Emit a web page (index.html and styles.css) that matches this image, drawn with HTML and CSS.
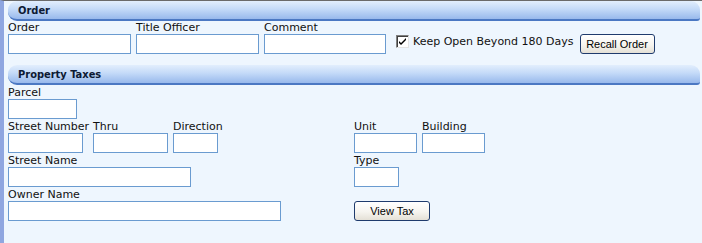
FILE: index.html
```html
<!DOCTYPE html>
<html lang="en">
<head>
    <meta charset="UTF-8">
    <title>Order - Property Taxes</title>
    <link rel="stylesheet" href="styles.css">
</head>
<body>
    <div class="page">
        <div class="band">Order</div>
        <div class="order-row">
            <label class="field"><span>Order</span><input class="box w-order" type="text"></label>
            <label class="field"><span>Title Officer</span><input class="box w-order" type="text"></label>
            <label class="field"><span>Comment</span><input class="box w-comment" type="text"></label>
            <label class="keep">
                <span class="check"><svg width="9" height="9" viewBox="0 0 9 9"><path d="M1 4 L3 6 L8 1 L8 3 L3 8 L1 6 Z" fill="#000"/></svg></span>
                Keep Open Beyond 180 Days
            </label>
            <button class="btn btn-recall">Recall Order</button>
        </div>

        <div class="band">Property Taxes</div>
        <div class="taxes">
            <div class="cell">
                <label class="field"><span>Parcel</span><input class="box w-parcel" type="text"></label>
            </div>
            <div class="cell"></div>

            <div class="cell">
                <label class="field f-stno"><span>Street Number</span><input class="box w-stno" type="text"></label>
                <label class="field"><span>Thru</span><input class="box w-stno" type="text"></label>
                <label class="field"><span>Direction</span><input class="box w-small" type="text"></label>
            </div>
            <div class="cell">
                <label class="field"><span>Unit</span><input class="box w-unit" type="text"></label>
                <label class="field"><span>Building</span><input class="box w-unit" type="text"></label>
            </div>

            <div class="cell">
                <label class="field"><span>Street Name</span><input class="box w-street" type="text"></label>
            </div>
            <div class="cell">
                <label class="field"><span>Type</span><input class="box w-small" type="text"></label>
            </div>

            <div class="cell">
                <label class="field"><span>Owner Name</span><input class="box w-owner" type="text"></label>
            </div>
            <div class="cell">
                <button class="btn btn-view">View Tax</button>
            </div>
        </div>
    </div>
</body>
</html>
```

FILE: styles.css
```css
/* Stil general */
body {
    margin: 0;
    font-family: "DejaVu Sans", Verdana, sans-serif;
    font-size: 11px;
    color: #111;
    background-color: #eef6fe;
}

.page {
    height: 242px;
    border-top: 1px solid #6a6a6a;
    border-left: 4px solid #8fa6e0;
    padding: 0 2px 0 4px;
    background-color: #eef6fe;
}

/* Bara de titlu a sectiunii */
.band {
    height: 17px;
    line-height: 18px;
    padding: 1px 0 0 10px;
    font-family: "DejaVu Sans Condensed", "DejaVu Sans", sans-serif;
    font-stretch: condensed;
    font-weight: bold;
    color: #0d1a33;
    background: linear-gradient(to bottom, #e2eefd 0%, #c4daf8 45%, #98b9ec 100%);
    border-bottom: 2px solid #4b78c3;
    border-radius: 9px 9px 3px 9px / 9px 9px 3px 9px;
}

.field {
    display: flex;
    flex-direction: column;
}

.field span {
    line-height: 13px;
    height: 13px;
    white-space: nowrap;
}

.f-stno { width: 80px; }

.box {
    box-sizing: border-box;
    height: 20px;
    margin: 0;
    padding: 0 3px;
    border: 1px solid #6a9bd0;
    background-color: #fff;
    font-family: inherit;
    font-size: 11px;
    outline: none;
}

.w-order { width: 123px; }
.w-comment { width: 122px; }
.w-parcel { width: 69px; }
.w-stno { width: 75px; }
.w-small { width: 45px; }
.w-unit { width: 63px; }
.w-street { width: 183px; }
.w-owner { width: 273px; }

/* Randul cu comanda */
.order-row {
    display: flex;
    align-items: flex-end;
    gap: 5px;
    margin-bottom: 11px;
}

.keep {
    display: flex;
    align-items: center;
    gap: 4px;
    margin-left: 5px;
    margin-right: 1px;
    height: 20px;
    padding-bottom: 5px;
    box-sizing: border-box;
    white-space: nowrap;
}

.check {
    box-sizing: border-box;
    width: 13px;
    height: 13px;
    display: flex;
    align-items: center;
    justify-content: center;
    background-color: #fff;
    border-top: 1px solid #808080;
    border-left: 1px solid #808080;
    border-right: 1px solid #e4e4e4;
    border-bottom: 1px solid #e4e4e4;
    box-shadow: inset 1px 1px 0 #404040;
}

.btn {
    box-sizing: border-box;
    height: 20px;
    padding: 0;
    font-family: "Liberation Sans", Arial, sans-serif;
    font-size: 11px;
    color: #000;
    background: linear-gradient(to bottom, #ffffff 0%, #f6f4ef 55%, #e4e0d6 100%);
    border: 1px solid #1f3b6d;
    border-radius: 3px;
    cursor: pointer;
}

.btn-recall { width: 75px; }
.btn-view { width: 76px; }

/* Grila pentru taxe */
.taxes {
    display: grid;
    grid-template-columns: 346px 1fr;
    row-gap: 1px;
    padding-top: 1px;
}

.cell {
    display: flex;
    align-items: flex-end;
    gap: 5px;
}
```
